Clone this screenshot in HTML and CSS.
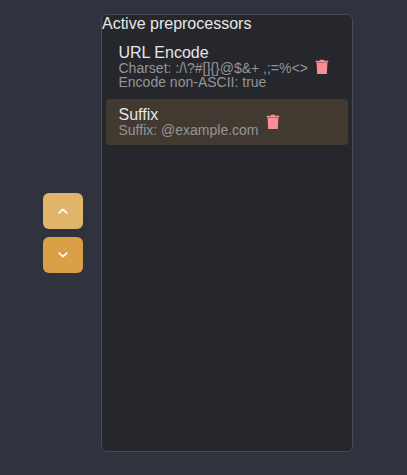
FILE: index.html
```html
<!DOCTYPE html>
<html lang="en">
<head>
<meta charset="utf-8">
<title>Preprocessors</title>
<link rel="stylesheet" href="styles.css">
</head>
<body>
<main class="layout">
  <div class="controls">
    <button class="move move-up" aria-label="Move up"><svg width="12" height="12" viewBox="0 0 12 12"><path d="M2.2 7.9 6 4.3l3.8 3.6"/></svg></button>
    <button class="move" aria-label="Move down"><svg width="12" height="12" viewBox="0 0 12 12"><path d="M2.2 4.1 6 7.7l3.8-3.6"/></svg></button>
  </div>
  <section class="panel">
    <h2 class="title">Active preprocessors</h2>
    <ul class="list">
      <li class="item">
        <div>
          <div class="name">URL Encode</div>
          <div class="detail">Charset: :/\?#[]{}@$&amp;+ ,;=%&lt;&gt;</div>
          <div class="detail">Encode non-ASCII: true</div>
        </div>
        <svg class="trash" width="14" height="16" viewBox="0 0 14 16"><path d="M.7 1.7h3.8l.8-.9h3.4l.8.9h3.8V3H.7z"/><path class="can" d="M1.5 3h11l-.7 12H2.2z"/><path class="rim" d="M1.5 3h11v.8h-11z"/></svg>
      </li>
      <li class="item selected">
        <div>
          <div class="name">Suffix</div>
          <div class="detail">Suffix: @example.com</div>
        </div>
        <svg class="trash" width="14" height="16" viewBox="0 0 14 16"><path d="M.7 1.7h3.8l.8-.9h3.4l.8.9h3.8V3H.7z"/><path class="can" d="M1.5 3h11l-.7 12H2.2z"/><path class="rim" d="M1.5 3h11v.8h-11z"/></svg>
      </li>
    </ul>
  </section>
</main>
</body>
</html>
```
FILE: styles.css
```css
* { box-sizing: border-box; }
body {
  margin: 0;
  height: 475px;
  background: #30333d;
  color: #e6e6e7;
  font-family: "Liberation Sans", Arial, sans-serif;
  overflow: hidden;
}
.layout {
  display: flex;
  align-items: center;
  gap: 18px;
  padding: 14px 0 0 43px;
}
.controls { display: flex; flex-direction: column; gap: 8px; }
.move {
  display: flex;
  align-items: center;
  justify-content: center;
  width: 40px;
  height: 36px;
  padding: 0;
  border: 0;
  border-radius: 6px;
  background: #d9a047;
}
.move-up { background: #e1b56c; }
.move path {
  fill: none;
  stroke: #fff;
  stroke-width: 1.6;
  stroke-linecap: round;
  stroke-linejoin: round;
}
.panel {
  width: 252px;
  height: 438px;
  border: 1px solid #474a55;
  border-radius: 6px;
  background: #26272c;
}
.title { margin: 0; font-size: 16px; font-weight: 400; line-height: 18px; }
.list {
  display: flex;
  flex-direction: column;
  gap: 2px;
  margin: 4px 4px 0;
  padding: 0;
  list-style: none;
}
.item {
  display: flex;
  align-items: center;
  gap: 7px;
  padding: 7px 12px 8px 12.5px;
  border-radius: 4px;
  white-space: nowrap;
}
.selected { background: #423a30; }
.name { font-size: 16px; line-height: 17px; }
.detail { color: #949597; font-size: 14px; line-height: 14px; }
.trash { flex: none; fill: #fa8e95; }
.rim { fill: #a85f65; }
```
